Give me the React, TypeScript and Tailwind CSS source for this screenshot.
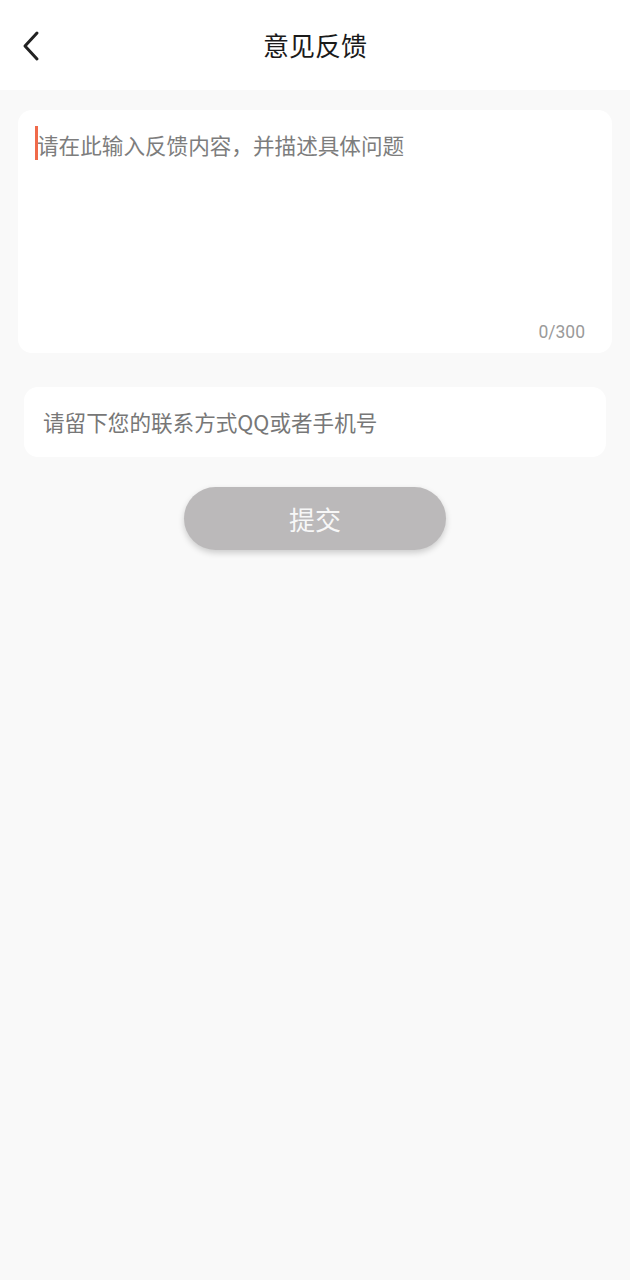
import React from "react";

export default function App() {
  return (
    <div
      className="w-[630px] h-[1280px] bg-[#f9f9f9] flex flex-col"
      style={{ fontFamily: '"Noto Sans CJK SC", "Noto Sans", sans-serif' }}
    >
      <div className="relative h-[90px] bg-white flex items-center justify-center shrink-0">
        <div className="absolute left-[20px] top-[29px] w-[22px] h-[34px] flex items-center justify-center">
          <svg width="20" height="32" viewBox="0 0 20 32" fill="none">
            <path d="M16 3 L4 16 L16 29" stroke="#222" strokeWidth="3" strokeLinecap="round" strokeLinejoin="round" />
          </svg>
        </div>
        <span className="text-[26px] text-[#1a1a1a] leading-none">意见反馈</span>
      </div>

      <div className="mx-[18px] mt-[20px] h-[243px] bg-white rounded-[14px] relative flex flex-col">
        <div className="pl-[19px] pt-[18px] flex items-center relative">
          <div className="absolute left-[17px] top-[16px] w-[3px] h-[34px] bg-[#f06a4a]" />
          <span className="text-[21.6px] leading-[34px] text-[#7d7d7d]">请在此输入反馈内容，并描述具体问题</span>
        </div>
        <div className="flex-1" />
        <div className="flex justify-end pr-[27px] pb-[9px]">
          <span className="text-[17.5px] text-[#9a9a9a] leading-[24px]" style={{ fontFamily: 'Roboto, sans-serif' }}>0/300</span>
        </div>
      </div>

      <div className="mx-[24px] mt-[34px] h-[70px] bg-white rounded-[14px] flex items-center pl-[19px]">
        <span className="text-[21.6px] text-[#777] leading-none">请留下您的联系方式QQ或者手机号</span>
      </div>

      <div className="flex justify-center mt-[30px]">
        <div className="w-[262px] h-[63px] rounded-full bg-[#bbb9ba] shadow-[0_3px_6px_rgba(0,0,0,0.18)] flex items-center justify-center">
          <span className="text-[26px] text-[#f7f7f7] leading-none">提交</span>
        </div>
      </div>
    </div>
  );
}
